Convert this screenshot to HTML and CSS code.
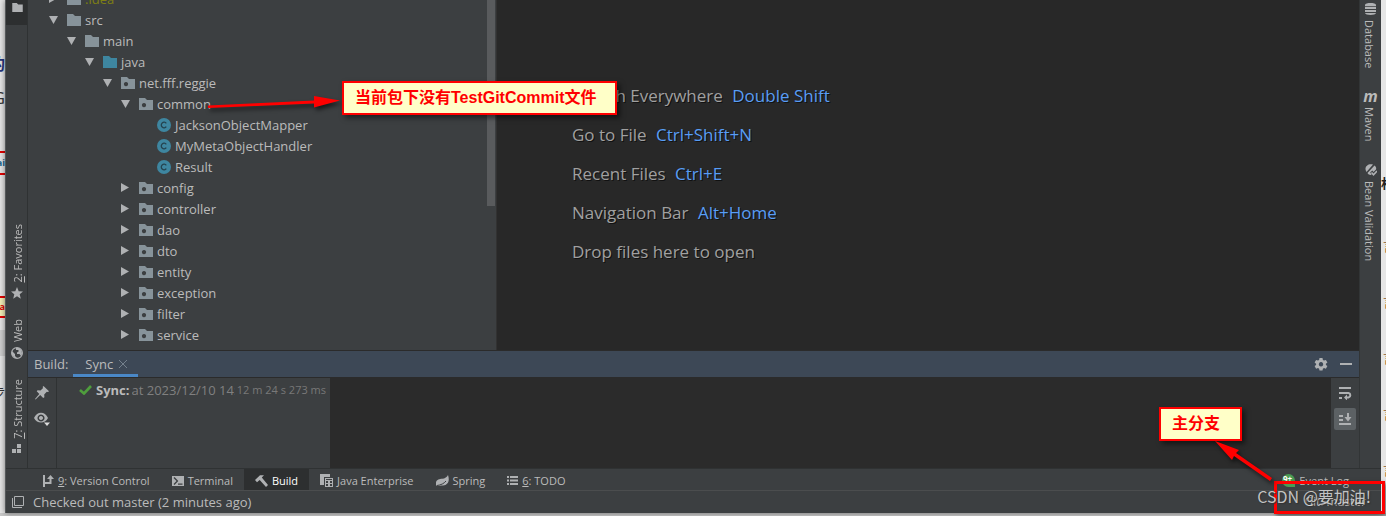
FILE: index.html
```
<!doctype html>
<html lang="en">
<head>
  <meta charset="UTF-8">
  <meta name="viewport" content="width=device-width, initial-scale=1">
  <title>reggie</title>
  <link rel="stylesheet" href="styles.css">
</head>
<body>
  <!-- icons shared by several rows -->
  <svg class="defs" aria-hidden="true">
    <symbol id="folder" viewBox="0 0 14 12"><path d="M0 0h6l2 2h6v10H0z"/></symbol>
    <symbol id="package" viewBox="0 0 14 12"><path fill-rule="evenodd" d="M0 0h6l2 2h6v10H0zM5 5a2.1 2.1 0 1 0 .01 0z"/></symbol>
    <symbol id="class" viewBox="0 0 14 14"><circle cx="7" cy="7" r="7" fill="#3e86a0"/><path d="M9.3 5.3a2.8 2.8 0 1 0 0 3.4" fill="none" stroke="#25434f" stroke-width="1.3"/></symbol>
    <symbol id="down" viewBox="0 0 10 10"><path d="M0 1h9L4.5 9z"/></symbol>
    <symbol id="right" viewBox="0 0 10 10"><path d="M0 0l8 4.5-8 4.5z"/></symbol>
  </svg>

  <div class="page-edge left-edge">
    <span class="frag navy">的</span>
    <span class="frag g">G</span>
    <span class="frag redbox">ai</span>
    <span class="frag note">na</span>
    <span class="frag grey"></span>
    <span class="frag dark">步</span>
  </div>

  <div class="ide">
    <div class="workspace">
      <nav class="stripe stripe-left">
        <button class="project" aria-label="Project"><svg width="11" height="9"><use href="#folder"/></svg></button>
        <button class="side"><svg width="12" height="12" viewBox="0 0 12 12"><path d="M6 0l1.7 4.2 4.3.3-3.3 2.8 1.1 4.4L6 9.3l-3.8 2.4 1.1-4.4L0 4.5l4.3-.3z"/></svg><span><u>2</u>: Favorites</span></button>
        <button class="side"><svg width="12" height="12" viewBox="0 0 12 12"><circle cx="6" cy="6" r="5.4" fill="none" stroke="#afb1b3" stroke-width="1.2"/><path d="M1 4l3 3v2l2 2H4L1 8zM5 1l3 0 2.5 2L11 7l-1 2-1.500-2H6V5.5L8 4 7 3 5 3z"/></svg><span>Web</span></button>
        <button class="side"><svg width="10" height="10" viewBox="0 0 10 10"><path d="M5 0h4v4H5zM0 5h4v4H0zM5 5h4v4H5z"/></svg><span><u>7</u>: Structure</span></button>
      </nav>

      <div class="center">
        <div class="upper">
          <div class="tree-panel">
            <ul class="tree">
              <li class="row d1 idea"><svg class="arrow"><use href="#right"/></svg><svg class="ico"><use href="#folder"/></svg>.idea</li>
              <li class="row d1"><svg class="arrow"><use href="#down"/></svg><svg class="ico"><use href="#folder"/></svg>src</li>
              <li class="row d2"><svg class="arrow"><use href="#down"/></svg><svg class="ico"><use href="#folder"/></svg>main</li>
              <li class="row d3"><svg class="arrow"><use href="#down"/></svg><svg class="ico source"><use href="#folder"/></svg>java</li>
              <li class="row d4"><svg class="arrow"><use href="#down"/></svg><svg class="ico"><use href="#package"/></svg>net.fff.reggie</li>
              <li class="row d5"><svg class="arrow"><use href="#down"/></svg><svg class="ico"><use href="#package"/></svg>common</li>
              <li class="row d6"><svg class="cls"><use href="#class"/></svg>JacksonObjectMapper</li>
              <li class="row d6"><svg class="cls"><use href="#class"/></svg>MyMetaObjectHandler</li>
              <li class="row d6"><svg class="cls"><use href="#class"/></svg>Result</li>
              <li class="row d5"><svg class="arrow"><use href="#right"/></svg><svg class="ico"><use href="#package"/></svg>config</li>
              <li class="row d5"><svg class="arrow"><use href="#right"/></svg><svg class="ico"><use href="#package"/></svg>controller</li>
              <li class="row d5"><svg class="arrow"><use href="#right"/></svg><svg class="ico"><use href="#package"/></svg>dao</li>
              <li class="row d5"><svg class="arrow"><use href="#right"/></svg><svg class="ico"><use href="#package"/></svg>dto</li>
              <li class="row d5"><svg class="arrow"><use href="#right"/></svg><svg class="ico"><use href="#package"/></svg>entity</li>
              <li class="row d5"><svg class="arrow"><use href="#right"/></svg><svg class="ico"><use href="#package"/></svg>exception</li>
              <li class="row d5"><svg class="arrow"><use href="#right"/></svg><svg class="ico"><use href="#package"/></svg>filter</li>
              <li class="row d5"><svg class="arrow"><use href="#right"/></svg><svg class="ico"><use href="#package"/></svg>service</li>
            </ul>
            <div class="scrollbar"></div>
          </div>
          <main class="editor">
            <p>Search Everywhere <kbd>Double Shift</kbd></p>
            <p>Go to File <kbd>Ctrl+Shift+N</kbd></p>
            <p>Recent Files <kbd>Ctrl+E</kbd></p>
            <p>Navigation Bar <kbd>Alt+Home</kbd></p>
            <p>Drop files here to open</p>
          </main>
        </div>

        <section class="build">
          <header class="build-head">
            <span class="build-title">Build:</span>
            <button class="tab">Sync<svg width="8" height="8" viewBox="0 0 8 8"><path d="M0 0l8 8M8 0L0 8" stroke="#74808c"/></svg></button>
            <button class="head-btn first" aria-label="Settings"><svg width="14" height="14" viewBox="0 0 14 14"><path fill-rule="evenodd" d="M5.5 1h3l.4 1.9 1.1.7 1.9-.7 1.5 2.6-1.5 1.2v1.2l1.5 1.2-1.5 2.6-1.9-.6-1.1.6-.4 1.9h-3l-.4-1.9-1.1-.6-1.9.6L.6 9.1l1.5-1.2V6.7L.6 5.5l1.5-2.6 1.9.7 1.1-.7zM7 5.1a2.2 2.2 0 1 0 .01 0z"/></svg></button>
            <button class="head-btn" aria-label="Hide"><svg width="12" height="2"><path d="M0 0h12v2H0z"/></svg></button>
          </header>
          <div class="build-body">
            <div class="tools">
              <button aria-label="Pin"><svg width="14" height="14" viewBox="0 0 14 14"><path d="M8.5 0L14 5.2l-1 .8-1.2-.2-2.6 2.6.2 2.8-1.2.8-3-3L.6 13.6 0 13l4.3-5L1.7 5.3l.9-1 2.9.2 2.6-2.4L7.6.9z"/></svg></button>
              <button aria-label="View"><svg width="16" height="14" viewBox="0 0 16 14"><path fill-rule="evenodd" d="M0 6c3-7 11-7 14 0-3 6-11 6-14 0zM7 2.500a3.500 3.500 0 1 0 .01 0zM7 4a2 2 0 1 1-.01 0z"/><path d="M10 10.500h6L13 14z" fill="#dcdcdc"/></svg></button>
            </div>
            <div class="sync">
              <svg width="13" height="10" viewBox="0 0 13 10"><path d="M1 5l4 3.5L12 1" fill="none" stroke="#4f9e3d" stroke-width="2.6"/></svg>
              <b>Sync:</b><span class="when">at 2023/12/10 14:46</span><span class="took">12 m 24 s 273 ms</span>
            </div>
            <div class="console"></div>
            <div class="tools right-tools">
              <button aria-label="Soft wrap"><svg width="14" height="14" viewBox="0 0 14 14"><path d="M1 2h12M1 7h9.500a2.300 2.300 0 0 1 0 4.500H8M1 12h3" fill="none" stroke="#afb1b3" stroke-width="2"/><path d="M9 8.500v6L6 11.500z"/></svg></button>
              <button class="on" aria-label="Scroll to end"><svg width="14" height="14" viewBox="0 0 14 14"><path d="M1 4h4M1 8h4M1 12h12M10 1v6" fill="none" stroke="#afb1b3" stroke-width="2"/><path d="M6.500 5h7L10 9.500z"/></svg></button>
            </div>
          </div>
        </section>
      </div>

      <nav class="stripe stripe-right">
        <button class="side"><svg width="11" height="12" viewBox="0 0 11 12"><path d="M0 2c0-2.600 11-2.600 11 0v1.200H0zM0 4h11v2H0zM0 7h11v2H0zM0 10h11c0 2.600-11 2.600-11 0z"/></svg><span>Database</span></button>
        <button class="side"><i class="maven">m</i><span>Maven</span></button>
        <button class="side"><svg width="12" height="12" viewBox="0 0 12 12"><path d="M1 7C-1 3 3-1 8 .5L1.500 8zM2.500 9L9.500 1.500c2 1.500 1.800 3 1.500 4L8.500 8 7.300 6.500 5.200 8.500l1.500 2.300c-1.500.4-3.200 0-4.200-1.800z"/><path d="M6.500 8.500l2 2.300L12 7" fill="none" stroke="#afb1b3" stroke-width="1.600"/></svg><span>Bean Validation</span></button>
      </nav>
    </div>

    <nav class="toolbar">
      <button><svg width="12" height="12" viewBox="0 0 12 12"><path d="M2 0v12M2 8h6.500V3" fill="none" stroke="#afb1b3" stroke-width="2"/><path d="M5 4l3.500-4L12 4z"/></svg><span><u>9</u>: Version Control</span></button>
      <button><svg width="12" height="12" viewBox="0 0 12 12"><path fill-rule="evenodd" d="M0 1h12v10H0zM1.500 3l3 3-3 3 1 .9L6.300 6 2.500 2.100zM6 8.500v1.200h4.500V8.500z"/></svg><span>Terminal</span></button>
      <button class="active"><svg width="13" height="12" viewBox="0 0 13 12"><path d="M0 5L5 .3 9 .2 6.800 2.500 13 10l-2 2-6.300-7L2 7.200z"/></svg><span>Build</span></button>
      <button><svg width="13" height="13" viewBox="0 0 13 13"><path fill-rule="evenodd" d="M0 0h10v3H4v8H0zM5 4h8v9H5zM6 5v1h6V5zM6 7v2h2V7zM10 7v2h2V7zM6 10v2h2v-2zM10 10v2h2v-2z"/></svg><span>Java Enterprise</span></button>
      <button><svg width="13" height="12" viewBox="0 0 13 12"><path d="M12 0c2 6 0 10-5 10.500-2 .2-4 0-6 .5L0 10c-1-5 3-6 6-6.200C9 3.600 11 2 12 0z"/><path d="M1 10.500c4-.5 7-2 9-4.500" fill="none" stroke="#3c3f41"/></svg><span>Spring</span></button>
      <button><svg width="11" height="9" viewBox="0 0 11 9"><path d="M0 0h2v2H0zM3 0h8v2H3zM0 3.500h2v2H0zM3 3.500h8v2H3zM0 7h2v2H0zM3 7h8v2H3z"/></svg><span><u>6</u>: TODO</span></button>
      <button class="event-log"><svg width="13" height="13" viewBox="0 0 13 13"><path d="M6.500 0a6.500 6.500 0 0 1 6.500 6.500V13H6.500a6.500 6.500 0 0 1 0-13z" fill="#499c54"/><text x="1" y="8" font-size="8" font-weight="bold" fill="#fff">9+</text></svg><span>Event Log</span></button>
    </nav>
    <footer class="status">
      <svg width="12" height="12" viewBox="0 0 12 12"><path d="M2.500.5h9v9h-9zM.5 2v9.500H10" fill="none" stroke="#afb1b3"/></svg>
      <span>Checked out master (2 minutes ago)</span>
      <span class="branch">Git: master</span>
    </footer>
  </div>

  <div class="page-edge right-edge">
    <span class="frag bold">村</span>
    <span class="frag">言</span>
    <span class="frag">言</span>
    <span class="frag">言</span>
    <span class="frag">言</span>
    <span class="frag">言</span>
  </div>

  <!-- notes drawn over the window -->
  <svg class="pointer package-pointer" width="134" height="20" viewBox="0 0 134 20"><path d="M0 12.500L106 7.500V3l26 4.500-26 7V10.500L0 15z" fill="red"/></svg>
  <div class="callout package-note">当前包下没有TestGitCommit文件</div>
  <div class="callout branch-note">主分支</div>
  <div class="frame"></div>
  <svg class="pointer branch-pointer" width="60" height="42" viewBox="0 0 60 42"><path d="M0 0l24 9-3 3 36 25-2 3-36-25-2 4z" fill="red"/></svg>
  <div class="watermark">CSDN @要加油!</div>
</body>
</html>
```
FILE: styles.css
```
*{
  box-sizing: border-box;
}
body{
  position: relative;
  margin: 0;
  min-height: 100vh;
  display: flex;
  padding-bottom: 3px;
  overflow: hidden;
  background: #c9c9c9;
  color: #bbbbbb;
  font: 13px/20px "Open Sans", "Noto Sans CJK SC", sans-serif;
}
svg{
  flex: none;
  fill: #afb1b3;
}
button{
  display: flex;
  align-items: center;
  border: 0;
  padding: 0;
  background: none;
  color: inherit;
  font: inherit;
}
p, ul{
  margin: 0;
  padding: 0;
}
.defs{
  display: none;
}

/* slices of the page behind the window */
.page-edge{
  flex: none;
  width: 5px;
  overflow: hidden;
  background: #e6e6e6;
  display: flex;
  flex-direction: column;
  align-items: flex-end;
}
.frag{
  flex: none;
  line-height: 20px;
}
.left-edge .frag{
  color: #333;
}
.left-edge .navy{
  margin-top: 54px;
  color: #26357c;
  font-size: 16px;
  font-weight: bold;
}
.left-edge .g{
  margin-top: 14px;
  font-size: 16px;
}
.left-edge .redbox{
  margin-top: 43px;
  border: solid #e00000;
  border-width: 2px 0;
  font-size: 9px;
  font-weight: bold;
  color: #15638c;
}
.left-edge .note{
  margin-top: 121px;
  border: solid #e00000;
  border-width: 2px 0;
  background: #f3efb8;
  font-size: 9px;
  line-height: 18px;
  font-weight: bold;
  color: #d00;
}
.left-edge .grey{
  width: 5px;
  height: 26px;
  margin-top: 12px;
  background: #cfcfcf;
}
.left-edge .dark{
  margin-top: 26px;
}

.ide{
  flex: 1;
  min-width: 0;
  display: flex;
  flex-direction: column;
  border-left: 1px solid #55585a;
  background: #3c3f41;
  box-shadow: 0 0 6px rgba(0,0,0,.5);
}
.workspace{
  flex: 1;
  display: flex;
}
.center{
  flex: 1;
  min-width: 0;
  display: flex;
  flex-direction: column;
}

/* tool window stripes */
.stripe{
  flex: none;
  width: 22px;
  display: flex;
  flex-direction: column;
  align-items: center;
  font-size: 11px;
  line-height: 16px;
}
.stripe-left{
  border-right: 1px solid #2f3233;
  padding-bottom: 14px;
  gap: 20px;
}
.stripe-right{
  border-left: 1px solid #323536;
  padding-top: 3px;
  gap: 22px;
}
.project{
  width: 100%;
  height: 25px;
  margin-bottom: auto;
  padding: 3px 0 0 6px;
  align-items: flex-start;
  background: #2d2f30;
}
.side{
  flex-direction: column;
  gap: 5px;
}
.stripe-left .side{
  flex-direction: column-reverse;
}
.side span{
  writing-mode: vertical-rl;
  padding-right: 3px;
}
.stripe-left .side span{
  transform: rotate(180deg);
}
.maven{
  font: italic bold 16px/12px "Open Sans", sans-serif;
}

/* project tree */
.upper{
  flex: 1 0 350px;
  display: flex;
}
.tree-panel{
  position: relative;
  flex: none;
  width: 469px;
  display: flex;
  overflow: hidden;
  border-right: 1px solid #323232;
}
.tree{
  flex: 1;
  height: 350px;
  display: flex;
  flex-direction: column;
  justify-content: flex-end;
  padding-bottom: 5px;
  list-style: none;
}
.row{
  flex: none;
  height: 21px;
  display: flex;
  align-items: center;
}
.idea{
  color: #7f7f13;
}
.d1{ padding-left: 21px; }
.d2{ padding-left: 39px; }
.d3{ padding-left: 57px; }
.d4{ padding-left: 75px; }
.d5{ padding-left: 93px; }
.d6{ padding-left: 129px; }
.arrow{
  width: 10px;
  height: 10px;
  margin-right: 8px;
}
.ico{
  width: 14px;
  height: 12px;
  margin-right: 4px;
  fill: #87939a;
}
.source{
  fill: #3e86a0;
}
.cls{
  width: 14px;
  height: 14px;
  margin-right: 4px;
}
.scrollbar{
  position: absolute;
  top: 0;
  right: 1px;
  width: 8px;
  height: 206px;
  background: #595b5d;
}

.editor{
  flex: 1;
  padding: 84px 0 0 75px;
  background: #282828;
  color: #a0a0a0;
  font-size: 17px;
  line-height: 24px;
  text-shadow: 1px 1px 0 #111;
}
.editor p{
  margin-bottom: 15px;
}
.editor kbd{
  margin-left: 5px;
  font: inherit;
  color: #589df6;
}

/* build window */
.build{
  flex: none;
  border-top: 1px solid #2b2b2b;
}
.build-head{
  display: flex;
  align-items: center;
  height: 27px;
  padding: 0 7px 0 6px;
  border-bottom: 1px solid #2b2b2b;
  background: #3d4856;
}
.build-title{
  margin-right: 5px;
}
.tab{
  height: 26px;
  gap: 6px;
  padding: 3px 11px 0 12px;
  border-bottom: 3px solid #4a88c7;
}
.head-btn{
  margin-left: 12px;
}
.head-btn.first{
  margin-left: auto;
}
.build-body{
  display: flex;
  height: 90px;
}
.tools{
  flex: none;
  width: 29px;
  display: flex;
  flex-direction: column;
  align-items: center;
  gap: 4px;
  padding-top: 4px;
  border-right: 1px solid #2f3233;
}
.tools button{
  width: 22px;
  height: 22px;
  justify-content: center;
  border-radius: 2px;
}
.tools .on{
  background: #5c6164;
}
.right-tools{
  width: 28px;
  border: 0;
}
.sync{
  flex: none;
  width: 273px;
  height: 24px;
  display: flex;
  align-items: center;
  padding: 0 4px 0 22px;
  white-space: nowrap;
}
.sync b{
  margin: 0 2px 0 4px;
}
.when{
  flex: 1;
  min-width: 0;
  overflow: hidden;
  color: #808080;
}
.took{
  margin-left: 2px;
  color: #787878;
  font-size: 11px;
}
.console{
  flex: 1;
  background: #2b2b2b;
}

/* bottom bars */
.toolbar{
  flex: none;
  display: flex;
  height: 23px;
  padding-left: 25px;
  border-top: 1px solid #2f3233;
  border-bottom: 1px solid #4b4d4e;
  font-size: 11px;
}
.toolbar button{
  gap: 4px;
  padding: 2px 11px 0;
}
.toolbar .active{
  background: #2d2f30;
  color: #fff;
}
.toolbar .event-log{
  margin-left: auto;
  margin-right: 21px;
}
.status{
  flex: none;
  display: flex;
  align-items: center;
  height: 22px;
  gap: 9px;
  padding: 0 15px 0 6px;
}
.branch{
  margin-left: auto;
  font-size: 12px;
}

/* notes */
.callout{
  position: absolute;
  height: 34px;
  border: 2px solid red;
  background: #ffffc8;
  box-shadow: 3px 3px 5px rgba(0,0,0,.5);
  color: red;
  font: bold 16px/30px "Liberation Sans", "Noto Sans CJK SC", sans-serif;
  padding-left: 11px;
}
.package-note{
  left: 342px;
  top: 81px;
  width: 275px;
}
.branch-note{
  right: 144px;
  bottom: 75px;
  width: 83px;
}
.pointer{
  position: absolute;
  filter: drop-shadow(2px 3px 2px rgba(0,0,0,.6));
}
.package-pointer{
  left: 208px;
  top: 93px;
}
.branch-pointer{
  right: 111px;
  bottom: 33px;
}
.frame{
  position: absolute;
  right: 1px;
  bottom: 2px;
  width: 111px;
  height: 33px;
  border: 3px solid red;
  box-shadow: 2px 2px 4px rgba(0,0,0,.5);
}
.watermark{
  position: absolute;
  right: 15px;
  bottom: 8px;
  color: rgba(220,220,220,.85);
  font: 16px/24px "Noto Sans CJK SC", sans-serif;
  text-shadow: 1px 1px 1px #333;
}

.right-edge .frag{
  width: 5px;
  padding-left: 2px;
  overflow: hidden;
  color: #8a5a2c;
}
.right-edge .bold{
  margin-top: 173px;
  margin-bottom: 7px;
  padding-left: 0;
  font-weight: bold;
  color: #222;
}
.right-edge .frag + .frag{
  margin-top: 36px;
}
```
